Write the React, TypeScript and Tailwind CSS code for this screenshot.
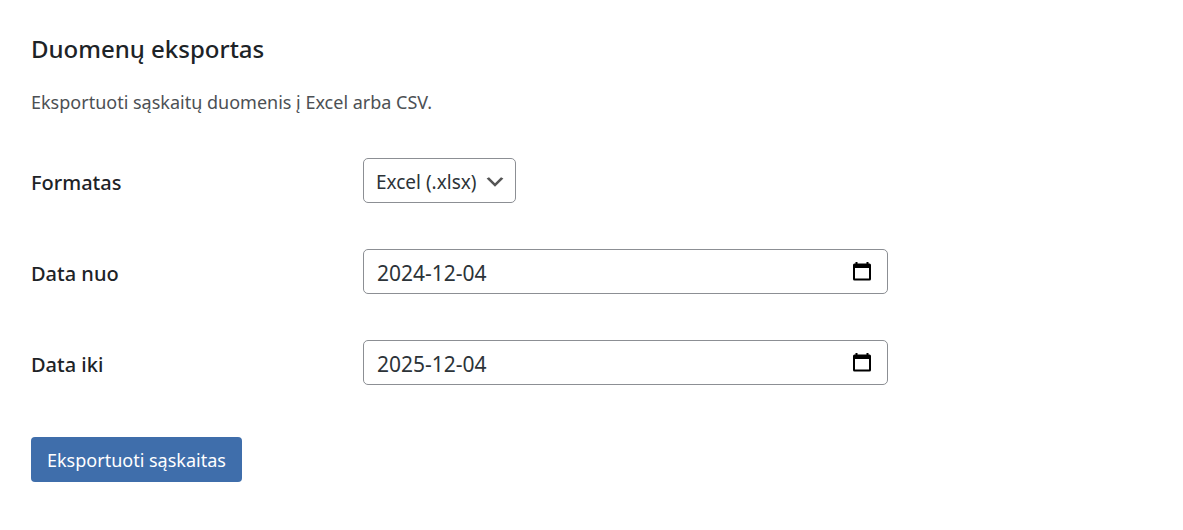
import { useState } from 'react';

const labelClass = 'w-[332px] shrink-0 pt-1 text-xl font-medium text-[#1d2327]';
const fieldClass = 'h-[45px] rounded-[5px] border border-[#8c8f94] bg-white text-[#2c3338] outline-none';

interface DateRowProps {
  id: string;
  label: string;
  value: string;
  onChange: (value: string) => void;
}

function DateRow({ id, label, value, onChange }: DateRowProps) {
  return (
    <div className="flex items-center">
      <label htmlFor={id} className={labelClass}>
        {label}
      </label>
      <div className="relative w-full max-w-[525px]">
        <input
          id={id}
          type="text"
          value={value}
          onChange={(e) => onChange(e.target.value)}
          className={`${fieldClass} w-full pt-0.5 pr-12 pl-[13px] text-[21px]`}
        />
        <svg
          viewBox="0 0 18 19"
          className="pointer-events-none absolute top-[13px] right-[17px] h-[19px] w-[18px]"
          fill="#000"
          aria-hidden="true"
        >
          <path
            fillRule="evenodd"
            d="M2.500 0h2v1.500h9V0h2v1.500h1a1.500 1.500 0 0 1 1.500 1.500v14a1.500 1.500 0 0 1-1.500 1.500h-15A1.500 1.500 0 0 1 0 17V3a1.500 1.500 0 0 1 1.500-1.500h1zM2 6v10.500h14V6z"
          />
        </svg>
      </div>
    </div>
  );
}

export default function App() {
  const [format, setFormat] = useState('xlsx');
  const [dateFrom, setDateFrom] = useState('2024-12-04');
  const [dateTo, setDateTo] = useState('2025-12-04');

  return (
    <div className="min-h-screen bg-white px-[31px] pt-[33px] pb-12 font-['Noto_Sans',sans-serif]">
      <h2 className="text-2xl font-medium text-[#1d2327]">Duomenų eksportas</h2>
      <p className="mt-[23px] text-lg text-[#4c5054]">Eksportuoti sąskaitų duomenis į Excel arba CSV.</p>

      <form className="mt-[42px]" onSubmit={(e) => e.preventDefault()}>
        <div className="space-y-[46px]">
          <div className="flex items-center">
            <label htmlFor="format" className={labelClass}>
              Formatas
            </label>
            <div className="relative">
              <select
                id="format"
                value={format}
                onChange={(e) => setFormat(e.target.value)}
                className={`${fieldClass} w-[153px] appearance-none pt-1 pr-8 pl-3 text-[19px]`}
              >
                <option value="xlsx">Excel (.xlsx)</option>
                <option value="csv">CSV</option>
              </select>
              <svg
                viewBox="0 0 20 20"
                className="pointer-events-none absolute top-3 right-[9px] h-6 w-6"
                fill="#555"
                aria-hidden="true"
              >
                <path d="M5 6l5 5 5-5 2 1-7 7-7-7 2-1z" />
              </svg>
            </div>
          </div>
          <DateRow id="date-from" label="Data nuo" value={dateFrom} onChange={setDateFrom} />
          <DateRow id="date-to" label="Data iki" value={dateTo} onChange={setDateTo} />
        </div>

        <button
          type="submit"
          className="mt-[52px] h-[45px] rounded-[4px] bg-[#3f6eab] px-4 text-lg text-white"
        >
          Eksportuoti sąskaitas
        </button>
      </form>
    </div>
  );
}
